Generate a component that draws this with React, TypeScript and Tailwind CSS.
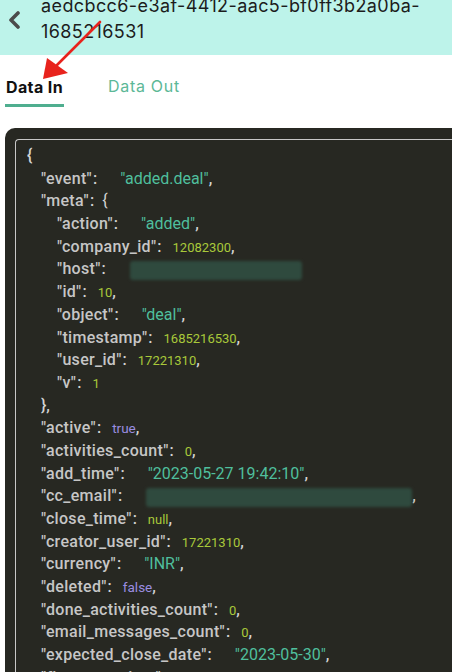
import React from 'react';

type Part = { t: string; c: 'key' | 'str' | 'num' | 'bool' | 'punc' | 'open' | 'blur'; w?: number };
type Line = { level: number; parts: Part[] };

const k = (t: string): Part => ({ t: `"${t}"`, c: 'key' });

const lines: Line[] = [
  { level: 0, parts: [{ t: '{', c: 'punc' }] },
  { level: 1, parts: [k('event'), { t: ':', c: 'punc' }, { t: '"added.deal"', c: 'str' }, { t: ',', c: 'punc' }] },
  { level: 1, parts: [k('meta'), { t: ':', c: 'punc' }, { t: '{', c: 'open' }] },
  { level: 2, parts: [k('action'), { t: ':', c: 'punc' }, { t: '"added"', c: 'str' }, { t: ',', c: 'punc' }] },
  { level: 2, parts: [k('company_id'), { t: ':', c: 'punc' }, { t: '12082300', c: 'num' }, { t: ',', c: 'punc' }] },
  { level: 2, parts: [k('host'), { t: ':', c: 'punc' }, { t: '', c: 'blur', w: 172 }] },
  { level: 2, parts: [k('id'), { t: ':', c: 'punc' }, { t: '10', c: 'num' }, { t: ',', c: 'punc' }] },
  { level: 2, parts: [k('object'), { t: ':', c: 'punc' }, { t: '"deal"', c: 'str' }, { t: ',', c: 'punc' }] },
  { level: 2, parts: [k('timestamp'), { t: ':', c: 'punc' }, { t: '1685216530', c: 'num' }, { t: ',', c: 'punc' }] },
  { level: 2, parts: [k('user_id'), { t: ':', c: 'punc' }, { t: '17221310', c: 'num' }, { t: ',', c: 'punc' }] },
  { level: 2, parts: [k('v'), { t: ':', c: 'punc' }, { t: '1', c: 'num' }] },
  { level: 1, parts: [{ t: '},', c: 'punc' }] },
  { level: 1, parts: [k('active'), { t: ':', c: 'punc' }, { t: 'true', c: 'bool' }, { t: ',', c: 'punc' }] },
  { level: 1, parts: [k('activities_count'), { t: ':', c: 'punc' }, { t: '0', c: 'num' }, { t: ',', c: 'punc' }] },
  { level: 1, parts: [k('add_time'), { t: ':', c: 'punc' }, { t: '"2023-05-27 19:42:10"', c: 'str' }, { t: ',', c: 'punc' }] },
  { level: 1, parts: [k('cc_email'), { t: ':', c: 'punc' }, { t: '', c: 'blur', w: 266 }, { t: ',', c: 'punc' }] },
  { level: 1, parts: [k('close_time'), { t: ':', c: 'punc' }, { t: 'null', c: 'num' }, { t: ',', c: 'punc' }] },
  { level: 1, parts: [k('creator_user_id'), { t: ':', c: 'punc' }, { t: '17221310', c: 'num' }, { t: ',', c: 'punc' }] },
  { level: 1, parts: [k('currency'), { t: ':', c: 'punc' }, { t: '"INR"', c: 'str' }, { t: ',', c: 'punc' }] },
  { level: 1, parts: [k('deleted'), { t: ':', c: 'punc' }, { t: 'false', c: 'bool' }, { t: ',', c: 'punc' }] },
  { level: 1, parts: [k('done_activities_count'), { t: ':', c: 'punc' }, { t: '0', c: 'num' }, { t: ',', c: 'punc' }] },
  { level: 1, parts: [k('email_messages_count'), { t: ':', c: 'punc' }, { t: '0', c: 'num' }, { t: ',', c: 'punc' }] },
  { level: 1, parts: [k('expected_close_date'), { t: ':', c: 'punc' }, { t: '"2023-05-30"', c: 'str' }, { t: ',', c: 'punc' }] },
  { level: 1, parts: [k('first_won_time'), { t: ':', c: 'punc' }, { t: 'null', c: 'num' }, { t: ',', c: 'punc' }] },
];

function Token({ p }: { p: Part }) {
  if (p.c === 'key')
    return <span className="text-[16px] font-medium tracking-[0.3px] text-[#c6c6c6]">{p.t}</span>;
  if (p.c === 'punc') {
    const isColon = p.t === ':';
    return (
      <span className={`text-[16px] font-medium text-[#d4d4d4] ${isColon ? 'ml-[1px]' : ''}`}>
        {p.t}
      </span>
    );
  }
  if (p.c === 'open') return <span className="ml-[8px] text-[16px] text-[#d4d4d4]">{p.t}</span>;
  if (p.c === 'str') return <span className="ml-[23px] text-[16px] text-[#4fbf9d]">{p.t}</span>;
  if (p.c === 'num') return <span className="ml-[11px] text-[13px] text-[#a9c93a]">{p.t}</span>;
  if (p.c === 'bool') return <span className="ml-[11px] text-[13.5px] text-[#9a8de0]">{p.t}</span>;
  return (
    <span
      className="ml-[24px] inline-block h-[19px] rounded-[3px] bg-[#2f4a3e] align-middle blur-[1.5px]"
      style={{ width: p.w }}
    />
  );
}

export default function App() {
  return (
    <div className="relative h-[672px] w-[452px] overflow-hidden bg-white">
      {/* Header */}
      <header className="flex h-[55px] items-start overflow-hidden bg-[#bdf3ea]">
        <svg className="ml-[7px] mt-[11px] shrink-0" width="14" height="18" viewBox="0 0 14 18">
          <path
            d="M11 2 L4 9 L11 16"
            fill="none"
            stroke="#4b4b4b"
            strokeWidth="3.6"
            strokeLinecap="round"
            strokeLinejoin="round"
          />
        </svg>
        <div
          className="ml-[20px] mt-[-7px] text-[18px] leading-[26px] tracking-[0.4px] text-[#1c1c1c]"
          style={{ fontFamily: 'Inter, "DejaVu Sans", sans-serif' }}
        >
          <div className="whitespace-nowrap">aedcbcc6-e3af-4412-aac5-bf0ff3b2a0ba-</div>
          <div>1685216531</div>
        </div>
      </header>

      {/* Tabs */}
      <div
        className="flex h-[52px] items-end pl-[5px]"
        style={{ fontFamily: 'Inter, "DejaVu Sans", sans-serif' }}
      >
        <div className="flex w-[59px] flex-col items-center">
          <span className="whitespace-nowrap text-[16px] font-bold leading-[20px] tracking-[0.4px] text-[#111]">
            Data In
          </span>
          <div className="mt-[7px] h-[3px] w-full bg-[#4fae8f]" />
        </div>
        <span className="mb-[11px] ml-[44px] whitespace-nowrap text-[16px] leading-[20px] tracking-[0.7px] text-[#5cb897]">
          Data Out
        </span>
      </div>

      {/* Code block */}
      <div className="ml-[5px] mt-[21px] h-[600px] rounded-tl-[10px] bg-[#272822] pl-[10px] pt-[11px]">
        <div
          className="h-full rounded-tl-[4px] border-l border-t border-[#c8c8c8] pl-[11px] pt-[5px]"
          style={{ fontFamily: 'Roboto, "Liberation Sans", sans-serif' }}
        >
          {lines.map((line, i) => (
            <div
              key={i}
              className="h-[22.7px] whitespace-nowrap leading-[22.7px]"
              style={{ paddingLeft: line.level === 0 ? 0 : line.level === 1 ? 14 : 30 }}
            >
              {line.parts.map((p, j) => (
                <Token key={j} p={p} />
              ))}
            </div>
          ))}
        </div>
      </div>

      {/* Red annotation arrow */}
      <svg className="pointer-events-none absolute left-0 top-0" width="452" height="120">
        <line x1="100" y1="22" x2="57" y2="65" stroke="#e8231d" strokeWidth="2.6" strokeLinecap="round" />
        <polygon points="43,79 47,58 68,73" fill="#e8231d" />
      </svg>
    </div>
  );
}
